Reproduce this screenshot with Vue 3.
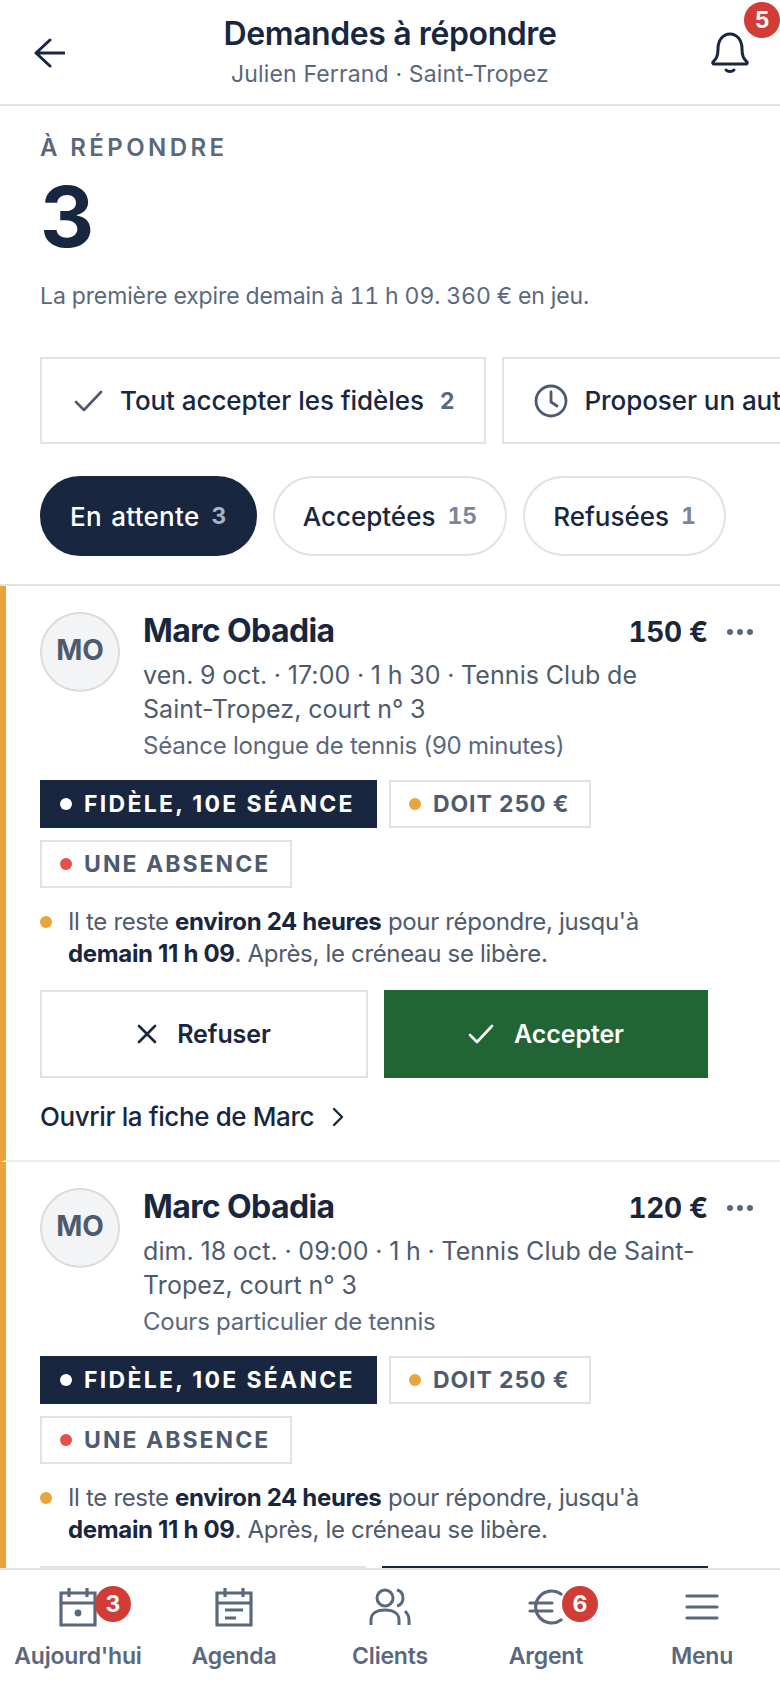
<script setup>
const pills = [
  { label: 'En attente', count: 3, active: true },
  { label: 'Acceptées', count: 15 },
  { label: 'Refusées', count: 1 },
]

const requests = [
  {
    id: 1,
    price: '150 €',
    when: 'ven. 9 oct. · 17:00 · 1 h 30 · Tennis Club de Saint-Tropez, court n° 3',
    service: 'Séance longue de tennis (90 minutes)',
    acceptClass: 'btn--green',
    columns: '328px 324px',
  },
  {
    id: 2,
    price: '120 €',
    when: 'dim. 18 oct. · 09:00 · 1 h · Tennis Club de Saint-Tropez, court n° 3',
    service: 'Cours particulier de tennis',
    acceptClass: 'btn--navy',
    columns: '326px 326px',
  },
]

const navItems = ['Aujourd\'hui', 'Agenda', 'Clients', 'Argent', 'Menu']
</script>

<template>
  <div class="app">
    <header class="topbar">
      <svg class="topbar__back" width="32" height="30" viewBox="0 0 32 30" fill="none">
        <path d="M31 15H3M17 2 3 15l14 13" stroke="#18273f" stroke-width="3" stroke-linecap="round" stroke-linejoin="round" />
      </svg>
      <div class="topbar__titles">
        <div class="topbar__title">Demandes à répondre</div>
        <div class="topbar__sub">Julien Ferrand · Saint-Tropez</div>
      </div>
      <svg class="topbar__bell" width="38" height="42" viewBox="1 0 38 42" fill="none">
        <path d="M3 30c3-3 5-5 5-13C8 8 13 2 20 2s12 6 12 15c0 8 2 10 5 13 .6.8 0 2-1 2H4c-1 0-1.600-1.200-1-2Z" stroke="#18273f" stroke-width="3" stroke-linejoin="round" />
        <path d="M16 38c2 2 6 2 8 0" stroke="#18273f" stroke-width="3" stroke-linecap="round" />
      </svg>
      <span class="badge topbar__badge">5</span>
    </header>

    <main class="content">
      <section class="hero">
        <div class="hero__label">À RÉPONDRE</div>
        <div class="hero__count">3</div>
        <div class="hero__text">La première expire demain à 11 h 09. 360 € en jeu.</div>

        <div class="actions">
          <div class="action">
            <svg width="30" height="24" viewBox="0 0 30 24" fill="none">
              <path d="M2 13l8 8L27 3" stroke="#4e5b6e" stroke-width="2.600" stroke-linecap="round" stroke-linejoin="round" />
            </svg>
            <span class="action__label">Tout accepter les fidèles</span>
            <span class="action__count">2</span>
          </div>
          <div class="action">
            <svg width="34" height="34" viewBox="0 0 34 34" fill="none">
              <circle cx="17" cy="17" r="15" stroke="#4e5b6e" stroke-width="2.800" />
              <path d="M17 8v10l6 4" stroke="#4e5b6e" stroke-width="2.800" stroke-linecap="round" stroke-linejoin="round" />
            </svg>
            <span class="action__label">Proposer un autre créneau</span>
          </div>
        </div>

        <div class="pills">
          <div v-for="pill in pills" :key="pill.label" class="pill" :class="{ 'pill--active': pill.active }">
            <span>{{ pill.label }}</span>
            <span class="pill__count">{{ pill.count }}</span>
          </div>
        </div>
      </section>

      <article v-for="req in requests" :key="req.id" class="card">
        <div class="card__head">
          <div class="avatar">MO</div>
          <div class="card__info">
            <div class="card__top">
              <div class="card__name">Marc Obadia</div>
              <div class="card__price">{{ req.price }}</div>
            </div>
            <div class="card__when">{{ req.when }}</div>
            <div class="card__service">{{ req.service }}</div>
          </div>
          <svg class="card__more" width="26" height="6" viewBox="0 0 26 6">
            <circle cx="3" cy="3" r="3" fill="#5a687d" />
            <circle cx="13" cy="3" r="3" fill="#5a687d" />
            <circle cx="23" cy="3" r="3" fill="#5a687d" />
          </svg>
        </div>

        <div class="tags">
          <span class="tag tag--navy"><i class="dot dot--white"></i>FIDÈLE, 10E SÉANCE</span>
          <span class="tag tag--tight"><i class="dot dot--orange"></i>DOIT 250 €</span>
          <span class="tag"><i class="dot dot--red"></i>UNE ABSENCE</span>
        </div>

        <div class="note">
          <i class="dot dot--orange note__dot"></i>
          <p>Il te reste <b>environ 24 heures</b> pour répondre, jusqu'à <b>demain 11 h 09</b>. Après, le créneau se libère.</p>
        </div>

        <div class="buttons" :style="{ gridTemplateColumns: req.columns }">
          <div class="btn btn--plain">
            <svg width="20" height="20" viewBox="0 0 20 20" fill="none">
              <path d="M2 2l16 16M18 2 2 18" stroke="#18273f" stroke-width="2.600" stroke-linecap="round" />
            </svg>
            Refuser
          </div>
          <div class="btn" :class="req.acceptClass">
            <svg width="26" height="20" viewBox="0 0 26 20" fill="none">
              <path d="M2 11l7 7L24 2" stroke="#fff" stroke-width="2.600" stroke-linecap="round" stroke-linejoin="round" />
            </svg>
            Accepter
          </div>
        </div>

        <div class="link">
          Ouvrir la fiche de Marc
          <svg width="12" height="20" viewBox="0 0 12 20" fill="none">
            <path d="M2 2l8 8-8 8" stroke="#18273f" stroke-width="2.400" stroke-linecap="round" stroke-linejoin="round" />
          </svg>
        </div>
      </article>
    </main>

    <nav class="nav">
      <div v-for="(item, i) in navItems" :key="item" class="nav__item">
        <div class="nav__icon">
          <svg v-if="i === 0" width="38" height="40" viewBox="0 0 38 40" fill="none" stroke="#5a687d" stroke-width="3.200">
            <path d="M2 6h34v32H2zM2 16h34M10 1v9M28 1v9" />
            <circle cx="19" cy="26" r="3.400" fill="#5a687d" stroke="none" />
          </svg>
          <svg v-else-if="i === 1" width="38" height="40" viewBox="0 0 38 40" fill="none" stroke="#5a687d" stroke-width="3.200">
            <path d="M2 6h34v32H2zM2 16h34M10 1v9M28 1v9M10 23h18M10 31h11" />
          </svg>
          <svg v-else-if="i === 2" width="42" height="38" viewBox="0 0 42 38" fill="none" stroke="#5a687d" stroke-width="3">
            <circle cx="16" cy="10" r="8" />
            <path d="M28 2c4 1 6 4 6 8s-2 7-6 8M2 37v-5c0-6 5-10 14-10s14 4 14 10v5M36 23c2 2 4 5 4 9v5" />
          </svg>
          <svg v-else-if="i === 3" width="36" height="36" viewBox="0 0 36 36" fill="none" stroke="#5a687d" stroke-width="3.200" stroke-linecap="round">
            <path d="M33 5a16 16 0 1 0 0 26M2 14h22M2 22h22" />
          </svg>
          <svg v-else width="34" height="26" viewBox="0 0 34 26" fill="none" stroke="#5a687d" stroke-width="3.200" stroke-linecap="round">
            <path d="M2 2h30M2 13h30M2 24h30" />
          </svg>
          <span v-if="i === 0" class="badge nav__badge nav__badge--today">3</span>
          <span v-if="i === 3" class="badge nav__badge nav__badge--money">6</span>
        </div>
        <div class="nav__label">{{ item }}</div>
      </div>
    </nav>
  </div>
</template>

<style>
html,
body {
  margin: 0;
  background: #fff;
}
</style>

<style scoped>
.app {
  width: 780px;
  height: 1688px;
  display: flex;
  flex-direction: column;
  overflow: hidden;
  position: relative;
  font-family: Inter, "Noto Sans", sans-serif;
  color: #18273f;
  background: #fff;
}

.topbar {
  position: relative;
  flex: none;
  height: 106px;
  box-sizing: border-box;
  border-bottom: 2px solid #e2e2e2;
  display: flex;
  align-items: center;
  justify-content: space-between;
  padding: 0 31px 0 33px;
}

.topbar__back {
  margin-top: 2px;
}

.topbar__titles {
  text-align: center;
  margin-left: 4px;
}

.topbar__title {
  font-size: 32px;
  line-height: 40px;
  font-weight: 600;
  letter-spacing: -0.4px;
}

.topbar__sub {
  font-size: 23px;
  line-height: 32px;
  margin-top: 4px;
  color: #5a687d;
  letter-spacing: 0.15px;
}

.topbar__bell {
  margin-top: 2px;
}

.badge {
  position: absolute;
  width: 36px;
  height: 36px;
  border-radius: 50%;
  background: #d13c36;
  color: #fff;
  font-size: 23px;
  font-weight: 700;
  display: flex;
  align-items: center;
  justify-content: center;
}

.topbar__badge {
  top: 2px;
  right: 0;
}

.content {
  flex: 1;
  min-height: 0;
  overflow: hidden;
}

.hero {
  padding: 28px 0 28px 40px;
  border-bottom: 2px solid #e2e2e2;
  overflow: hidden;
}

.hero__label {
  font-size: 24px;
  line-height: 28px;
  font-weight: 600;
  letter-spacing: 3.400px;
  color: #5a687d;
}

.hero__count {
  font-size: 84px;
  line-height: 84px;
  font-weight: 700;
  margin-top: 13px;
}

.hero__text {
  font-size: 23px;
  line-height: 32px;
  margin-top: 21px;
  color: #5a687d;
  letter-spacing: -0.12px;
  font-variant-numeric: tabular-nums;
}

.actions {
  display: flex;
  gap: 16px;
  margin-top: 45px;
  width: 1200px;
}

.action {
  height: 87px;
  box-sizing: border-box;
  border: 2px solid #e2e2e2;
  display: flex;
  align-items: center;
  padding: 0 30px 0 32px;
  gap: 16px;
  font-size: 26px;
  font-weight: 500;
  letter-spacing: -0.06px;
  white-space: nowrap;
}

.action + .action {
  padding-left: 30px;
}

.action__count {
  font-weight: 700;
  font-size: 23px;
  color: #5a687d;
}

.pills {
  display: flex;
  gap: 16px;
  margin-top: 32px;
}

.pill {
  height: 80px;
  box-sizing: border-box;
  border: 2px solid #e2e2e2;
  border-radius: 40px;
  padding: 0 28px;
  display: flex;
  align-items: center;
  gap: 12px;
  font-size: 26px;
  font-weight: 500;
}

.pill--active {
  background: #18273f;
  border-color: #18273f;
  color: #fff;
  letter-spacing: 0.3px;
  word-spacing: 2px;
}

.pill__count {
  font-size: 23px;
  font-weight: 700;
  font-variant-numeric: tabular-nums;
  color: #7b8798;
}

.pill--active .pill__count {
  color: #aab2be;
}

.card {
  box-sizing: border-box;
  height: 576px;
  padding: 26px 72px 27px 34px;
  border-left: 6px solid #e9a53c;
  border-bottom: 2px solid #ececec;
}

.card__head {
  position: relative;
  display: flex;
  gap: 23px;
}

.avatar {
  flex: none;
  width: 80px;
  height: 80px;
  box-sizing: border-box;
  border-radius: 50%;
  border: 2px solid #dcdcdc;
  background: #f3f4f6;
  display: flex;
  align-items: center;
  justify-content: center;
  padding-bottom: 4px;
  font-size: 28px;
  font-weight: 700;
  color: #4e5b6e;
}

.card__info {
  flex: 1;
  min-width: 0;
}

.card__top {
  display: flex;
  justify-content: space-between;
  align-items: flex-start;
  height: 46px;
}

.card__name {
  font-size: 32px;
  line-height: 38px;
  font-weight: 700;
  letter-spacing: -0.6px;
}

.card__price {
  font-size: 28px;
  line-height: 40px;
  font-weight: 700;
  letter-spacing: -0.3px;
  font-variant-numeric: tabular-nums;
}

.card__when {
  font-size: 25px;
  line-height: 34px;
  color: #4e5b6e;
  letter-spacing: 0.08px;
  word-spacing: -0.5px;
}

.card__service {
  font-size: 24px;
  line-height: 30px;
  margin-top: 5px;
  color: #5a687d;
  letter-spacing: -0.25px;
}

.card__more {
  position: absolute;
  top: 17px;
  left: 687px;
}

.tags {
  display: flex;
  flex-wrap: wrap;
  gap: 12px;
  margin-top: 19px;
}

.tag {
  height: 48px;
  box-sizing: border-box;
  border: 2px solid #e2e2e2;
  display: inline-flex;
  align-items: center;
  gap: 12px;
  padding: 0 20px 0 18px;
  font-size: 23px;
  font-weight: 700;
  letter-spacing: 2.050px;
  color: #4e5b6e;
}

.tag--navy {
  background: #18273f;
  border-color: #18273f;
  color: #fff;
  letter-spacing: 2.300px;
}

.tag--tight {
  letter-spacing: 0.9px;
}

.dot {
  display: inline-block;
  flex: none;
  width: 12px;
  height: 12px;
  border-radius: 50%;
}

.dot--white {
  background: #fff;
}

.dot--orange {
  background: #e9a53c;
}

.dot--red {
  background: #e5504c;
}

.note {
  display: flex;
  gap: 16px;
  margin-top: 18px;
  font-size: 24px;
  line-height: 32px;
  color: #4e5b6e;
  letter-spacing: -0.33px;
}

.note__dot {
  margin-top: 10px;
}

.note p {
  margin: 0;
}

.note b {
  font-weight: 700;
  color: #18273f;
}

.buttons {
  display: grid;
  gap: 16px;
  margin-top: 20px;
}

.btn {
  height: 88px;
  box-sizing: border-box;
  display: flex;
  align-items: center;
  justify-content: center;
  gap: 20px;
  font-size: 25px;
  font-weight: 600;
  letter-spacing: -0.1px;
}

.btn--plain {
  border: 2px solid #e2e2e2;
}

.btn--green {
  background: #216535;
  color: #fff;
}

.btn--navy {
  background: #18273f;
  color: #fff;
}

.link {
  display: flex;
  align-items: center;
  gap: 18px;
  margin-top: 23px;
  font-size: 26px;
  line-height: 32px;
  font-weight: 500;
  letter-spacing: -0.4px;
}

.nav {
  flex: none;
  height: 120px;
  box-sizing: border-box;
  border-top: 2px solid #e2e2e2;
  background: #fff;
  display: grid;
  grid-template-columns: repeat(5, 1fr);
}

.nav__item {
  display: flex;
  flex-direction: column;
  align-items: center;
}

.nav__icon {
  position: relative;
  height: 40px;
  margin-top: 17px;
  display: flex;
  align-items: center;
  justify-content: center;
}

.nav__badge--today {
  top: -1px;
  left: 36px;
}

.nav__badge--money {
  top: -1px;
  left: 34px;
}

.nav__label {
  font-size: 23px;
  line-height: 30px;
  margin-top: 14px;
  font-weight: 600;
  letter-spacing: -0.2px;
  color: #5a687d;
}
</style>
